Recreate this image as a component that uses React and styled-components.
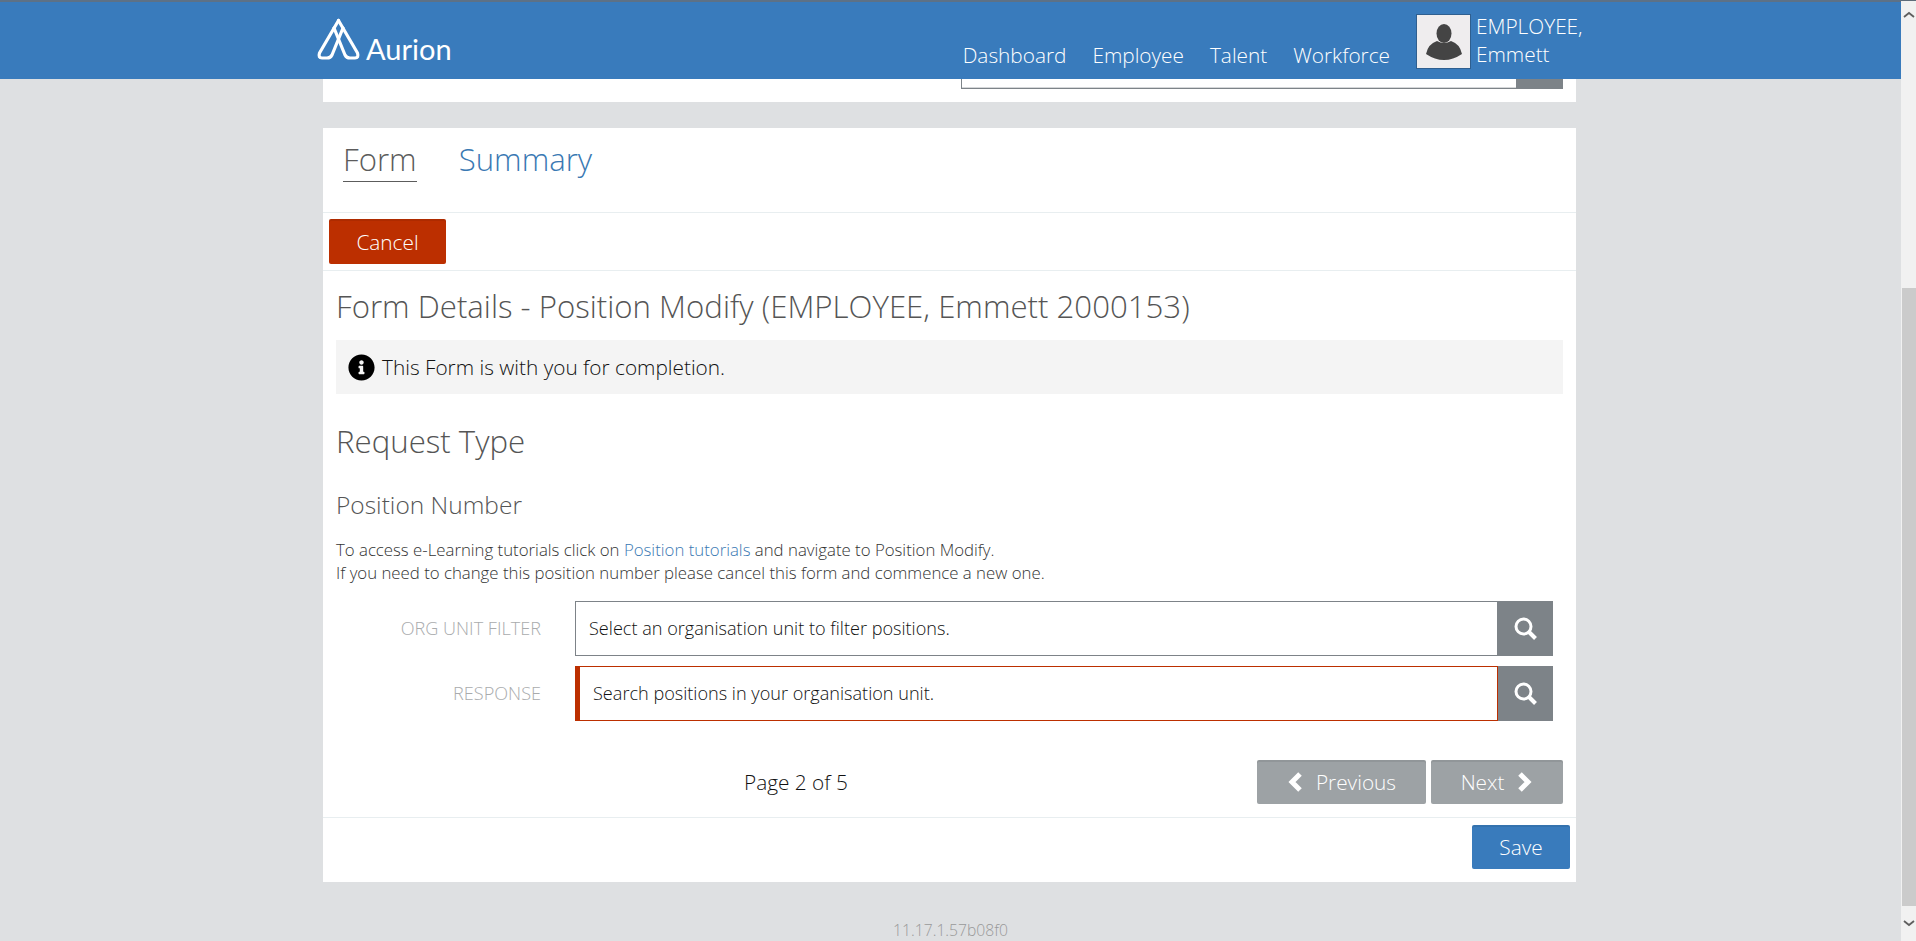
import React from "react";
import styled, { createGlobalStyle } from "styled-components";
import { FaInfoCircle } from "react-icons/fa";

const GlobalStyle = createGlobalStyle`
  html, body {
    margin: 0;
    height: 100%;
    overflow: hidden;
    background: #dee0e2;
    font-family: "Open Sans", "Liberation Sans", sans-serif;
    font-weight: 300;
  }
  * { box-sizing: border-box; }
`;

const Shell = styled.div`
  display: flex;
  height: 941px;
  overflow: hidden;
`;

const Page = styled.div`
  flex: 1;
  min-width: 0;
`;

const ScrollRail = styled.div`
  width: 15px;
  background: #f1f1f1;
  display: flex;
  flex-direction: column;
  padding-top: 1px;
  border-top: 1px solid #5d6b79;
`;

const ScrollArrow = styled.div`
  height: ${(p) => p.$h}px;
  display: flex;
  align-items: center;
  justify-content: center;
`;

const ScrollThumb = styled.div`
  height: 618px;
  margin-top: 262px;
  margin-left: 1px;
  background: #cbcbcb;
`;

const Header = styled.header`
  height: 79px;
  background: #397bbc;
  border-top: 2px solid #5d7186;
  display: flex;
  padding-left: 317px;
  padding-right: 315px;
`;

const Brand = styled.div`
  display: flex;
  align-items: flex-end;
  gap: 6px;
  height: 58px;
  color: #fff;
`;

const BrandName = styled.span`
  font-family: "Lato", "Open Sans", sans-serif;
  font-size: 29px;
  line-height: 29px;
  font-weight: 400;
  margin-bottom: -3px;
`;

const Nav = styled.nav`
  margin-left: auto;
  display: flex;
  align-items: flex-start;
`;

const NavLink = styled.a`
  color: #fff;
  font-size: 20.8px;
  line-height: 27px;
  margin-right: 26px;
  margin-top: 40px;
`;

const Avatar = styled.div`
  width: 55px;
  height: 55px;
  margin-top: 12px;
  background: #efedee;
  border: 1px solid #2f5f8f;
  display: flex;
  align-items: center;
  justify-content: center;
`;

const UserName = styled.div`
  width: 110px;
  margin-left: 5px;
  margin-top: 10px;
  color: #fff;
  font-size: 20.8px;
  line-height: 28px;
`;

const Panel = styled.section`
  width: 1253px;
  margin: 0 0 0 323px;
  background: #fff;
`;

const ClippedPanel = styled(Panel)`
  height: 23px;
  margin-bottom: 26px;
  display: flex;
  justify-content: flex-end;
  padding-right: 13px;
`;

const ClippedInput = styled.div`
  width: 556px;
  height: 10px;
  background: #fff;
  border: 1px solid #7d8388;
  border-top: none;
  box-shadow: inset 0 -1px 0 #d5d7d9;
`;

const ClippedButton = styled.div`
  width: 46px;
  height: 10px;
  background: #7d8388;
`;

const Tabs = styled.div`
  height: 85px;
  display: flex;
  gap: 42px;
  padding: 11px 0 0 20px;
  border-bottom: 1px solid #e8eef0;
`;

const Tab = styled.a`
  font-size: 31.2px;
  line-height: 41px;
  height: 43px;
  color: ${(p) => (p.$active ? "#5c5c5c" : "#3a79b3")};
  border-bottom: ${(p) => (p.$active ? "1px solid #5c5c5c" : "none")};
`;

const ActionBar = styled.div`
  height: 58px;
  padding: 6px;
  border-bottom: 1px solid #e8eef0;
`;

const Button = styled.button`
  font-family: inherit;
  font-weight: 300;
  font-size: 20.8px;
  color: #fff;
  border: none;
  border-radius: 2px;
  display: inline-flex;
  align-items: center;
  justify-content: center;
  gap: 14px;
  width: ${(p) => p.$w}px;
  height: ${(p) => p.$h || 44}px;
  padding: 0;
  background: ${(p) => p.$bg};
  box-shadow: inset 0 2px 0 rgba(0, 0, 0, 0.07);
`;

const Body = styled.div`
  padding: 0 12px 0 13px;
`;

const Title = styled.h1`
  margin: 0;
  font-size: 31.2px;
  line-height: 42px;
  font-weight: 300;
  color: #555;
  padding-top: 14px;
  height: 69px;
`;

const Alert = styled.div`
  height: 54px;
  width: 1227px;
  background: #f4f4f4;
  padding-left: 12px;
  display: flex;
  align-items: center;
  gap: 7px;
  font-size: 20.8px;
  color: #111;
`;

const SectionTitle = styled.h2`
  margin: 0;
  font-weight: 300;
  font-size: 31.2px;
  line-height: 42px;
  color: #555;
  padding-top: 26px;
  height: 88px;
`;

const SubTitle = styled.h3`
  margin: 0;
  font-weight: 300;
  font-size: 24.5px;
  line-height: 34px;
  color: #555;
  height: 56px;
  padding-top: 6px;
`;

const Help = styled.p`
  margin: 0 0 17px;
  font-size: 16.8px;
  line-height: 23px;
  color: #333;
`;

const HelpLink = styled.a`
  color: #3a79b3;
`;

const FormRow = styled.div`
  display: flex;
  align-items: center;
  height: 55px;
  margin-bottom: 10px;
`;

const FieldLabel = styled.label`
  width: 205px;
  text-align: right;
  font-size: 18.1px;
  color: #a9abad;
  text-transform: uppercase;
  margin-right: 34px;
  padding-bottom: 2px;
`;

const Input = styled.div`
  width: 923px;
  height: 55px;
  display: flex;
  align-items: center;
  font-size: 18.1px;
  color: #111;
  background: #fff;
  border: 1px solid ${(p) => (p.$invalid ? "#bc2f00" : "#7d8388")};
  border-left-width: ${(p) => (p.$invalid ? 5 : 1)}px;
  padding: 0 0 2px ${(p) => (p.$invalid ? 13 : 13)}px;
`;

const SearchButton = styled.div`
  width: 55px;
  height: 55px;
  background: #7d8388;
  display: flex;
  align-items: center;
  justify-content: center;
`;

const Pager = styled.div`
  display: flex;
  align-items: center;
  height: 44px;
  margin-top: 39px;
  padding-left: 408px;
`;

const PageLabel = styled.span`
  font-size: 20.8px;
  color: #111;
`;

const PagerButtons = styled.div`
  margin-left: auto;
  display: flex;
  gap: 5px;
  margin-right: 1px;
`;

const PanelFooter = styled.div`
  margin-top: 13px;
  height: 65px;
  border-top: 1px solid #e8eef0;
  display: flex;
  justify-content: flex-end;
  padding: 7px 6px 0 0;
`;

const Version = styled.div`
  text-align: center;
  font-size: 15.7px;
  line-height: 22px;
  color: #999;
  margin-top: 37px;
`;

const AurionMark = () => (
  <svg width="43" height="42" viewBox="0 0 43 42" fill="none" stroke="#fff" strokeWidth="3.2" strokeLinejoin="round" strokeLinecap="round">
    <path d="M21.5 2.5 L2.5 35 Q1 40 5 40 H10 Q13.5 40 15 37 L26 10" />
    <path d="M21.5 2.5 L40.5 35 Q42 40 38 40 H33 Q29.5 40 28 37 L17 10" />
  </svg>
);

const UserGlyph = () => (
  <svg width="36" height="36" viewBox="0 0 36 36" fill="#444">
    <ellipse cx="18" cy="9.5" rx="7.5" ry="9.5" />
    <path d="M11 17 Q18 21 25 17 Q34 20 36 30 Q27 36 18 36 Q9 36 0 30 Q2 20 11 17 Z" />
  </svg>
);

const SearchGlyph = () => (
  <svg width="23" height="23" viewBox="0 0 23 23" fill="none" stroke="#fff">
    <circle cx="9.5" cy="9.5" r="7.5" strokeWidth="3" />
    <path d="M15 15 L21.5 21.5" strokeWidth="4" />
  </svg>
);

const Chevron = ({ left }) => (
  <svg width="15" height="20" viewBox="0 0 15 20" fill="none" stroke="#fff" strokeWidth="5">
    <path d={left ? "M13 2 L5 10 L13 18" : "M2 2 L10 10 L2 18"} />
  </svg>
);

const Caret = ({ up }) => (
  <svg width="12" height="7" viewBox="0 0 12 7" fill="none" stroke="#5f5f5f" strokeWidth="1.8">
    <path d={up ? "M1 6 L6 2 L11 6" : "M1 1 L6 5 L11 1"} />
  </svg>
);

const navItems = ["Dashboard", "Employee", "Talent", "Workforce"];

const App = () => (
  <>
    <GlobalStyle />
    <Shell>
      <Page>
        <Header>
          <Brand>
            <AurionMark />
            <BrandName>Aurion</BrandName>
          </Brand>
          <Nav>
            {navItems.map((item) => (
              <NavLink key={item}>{item}</NavLink>
            ))}
            <Avatar>
              <UserGlyph />
            </Avatar>
            <UserName>
              EMPLOYEE,
              <br />
              Emmett
            </UserName>
          </Nav>
        </Header>

        <ClippedPanel>
          <ClippedInput />
          <ClippedButton />
        </ClippedPanel>

        <Panel>
          <Tabs>
            <Tab $active>Form</Tab>
            <Tab>Summary</Tab>
          </Tabs>
          <ActionBar>
            <Button $w={117} $h={45} $bg="#bc2f00">Cancel</Button>
          </ActionBar>
          <Body>
            <Title>Form Details - Position Modify (EMPLOYEE, Emmett 2000153)</Title>
            <Alert>
              <FaInfoCircle size={27} color="#000" />
              This Form is with you for completion.
            </Alert>
            <SectionTitle>Request Type</SectionTitle>
            <SubTitle>Position Number</SubTitle>
            <Help>
              To access e-Learning tutorials click on <HelpLink>Position tutorials</HelpLink> and navigate to Position Modify.
              <br />
              If you need to change this position number please cancel this form and commence a new one.
            </Help>
            <FormRow>
              <FieldLabel>Org Unit Filter</FieldLabel>
              <Input>Select an organisation unit to filter positions.</Input>
              <SearchButton><SearchGlyph /></SearchButton>
            </FormRow>
            <FormRow>
              <FieldLabel>Response</FieldLabel>
              <Input $invalid>Search positions in your organisation unit.</Input>
              <SearchButton><SearchGlyph /></SearchButton>
            </FormRow>
            <Pager>
              <PageLabel>Page 2 of 5</PageLabel>
              <PagerButtons>
                <Button $w={169} $bg="#9da2a5"><Chevron left />Previous</Button>
                <Button $w={132} $bg="#9da2a5">Next<Chevron /></Button>
              </PagerButtons>
            </Pager>
          </Body>
          <PanelFooter>
            <Button $w={98} $bg="#397bbc">Save</Button>
          </PanelFooter>
        </Panel>
        <Version>11.17.1.57b08f0</Version>
      </Page>
      <ScrollRail>
        <ScrollArrow $h={24}><Caret up /></ScrollArrow>
        <ScrollThumb />
        <ScrollArrow $h={34}><Caret /></ScrollArrow>
      </ScrollRail>
    </Shell>
  </>
);

export default App;
